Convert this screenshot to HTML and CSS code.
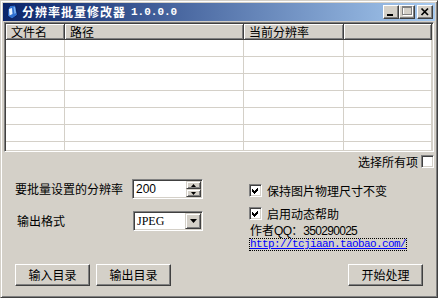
FILE: index.html
```html
<!DOCTYPE html>
<html lang="zh-CN">
<head>
<meta charset="utf-8">
<title>分辨率批量修改器</title>
<link rel="stylesheet" href="styles.css">
</head>
<body>
<div class="window">
  <div class="titlebar">
    <svg class="app-icon" width="16" height="16" viewBox="0 0 16 16">
      <path d="M6 1.5 L11.5 1 L13.5 11 L8 15 L3.5 12 L4 5 Z" fill="#2f6fd0" stroke="#0b1f5c" stroke-width="1"/>
      <path d="M5 5 L8 4 L8.5 10 L5.5 11.5 Z" fill="#e8f2ff"/>
      <path d="M9.5 3 L11 3 L12 9 L10.5 10 Z" fill="#7fb3f0"/>
    </svg>
    <span class="title"><span class="title-cjk">分辨率批量修改器</span> <span class="title-ver">1.0.0.0</span></span>
    <div class="caption-btns">
      <div class="cap">
        <svg width="14" height="12" viewBox="0 0 14 12"><rect x="3" y="8" width="6" height="2" fill="#000"/></svg>
      </div>
      <div class="cap">
        <svg width="14" height="12" viewBox="0 0 14 12" shape-rendering="crispEdges">
          <rect x="3.5" y="1.5" width="9" height="8" fill="none" stroke="#fff"/>
          <rect x="2.5" y="0.5" width="9" height="8" fill="none" stroke="#808080"/>
          <rect x="3" y="1" width="8" height="1" fill="#808080"/>
        </svg>
      </div>
      <div class="cap close">
        <svg width="14" height="12" viewBox="0 0 14 12">
          <path d="M3.5 2.5 L10 9 M10 2.5 L3.5 9" stroke="#000" stroke-width="1.7"/>
        </svg>
      </div>
    </div>
  </div>

  <div class="listview">
    <div class="lv-header">
      <div class="hcell c1">文件名</div>
      <div class="hcell c2">路径</div>
      <div class="hcell c3">当前分辨率</div>
      <div class="hcell c4"></div>
    </div>
    <div class="lv-body">
      <div class="lv-row"><div class="cell c1"></div><div class="cell c2"></div><div class="cell c3"></div><div class="cell c4"></div></div>
      <div class="lv-row"><div class="cell c1"></div><div class="cell c2"></div><div class="cell c3"></div><div class="cell c4"></div></div>
      <div class="lv-row"><div class="cell c1"></div><div class="cell c2"></div><div class="cell c3"></div><div class="cell c4"></div></div>
      <div class="lv-row"><div class="cell c1"></div><div class="cell c2"></div><div class="cell c3"></div><div class="cell c4"></div></div>
      <div class="lv-row"><div class="cell c1"></div><div class="cell c2"></div><div class="cell c3"></div><div class="cell c4"></div></div>
      <div class="lv-row"><div class="cell c1"></div><div class="cell c2"></div><div class="cell c3"></div><div class="cell c4"></div></div>
      <div class="lv-row"><div class="cell c1"></div><div class="cell c2"></div><div class="cell c3"></div><div class="cell c4"></div></div>
    </div>
  </div>

  <div class="selrow">
    <span class="sel-label">选择所有项</span>
    <span class="checkbox"></span>
  </div>

  <div class="form">
    <div class="left">
      <div class="frow">
        <span class="lbl lbl1">要批量设置的分辨率</span>
        <div class="spin">
          <span class="field-text">200</span>
          <div class="spin-btns">
            <div class="spin-btn"><svg width="5" height="3" viewBox="0 0 5 3"><path d="M2.5 0 L5 3 L0 3 Z" fill="#000"/></svg></div>
            <div class="spin-btn"><svg width="5" height="3" viewBox="0 0 5 3"><path d="M0 0 L5 0 L2.5 3 Z" fill="#000"/></svg></div>
          </div>
        </div>
      </div>
      <div class="frow frow2">
        <span class="lbl lbl2">输出格式</span>
        <div class="combo">
          <span class="field-text serif">JPEG</span>
          <div class="drop-btn"><svg width="7" height="4" viewBox="0 0 7 4"><path d="M0 0 L7 0 L3.5 4 Z" fill="#000"/></svg></div>
        </div>
      </div>
    </div>
    <div class="right">
      <div class="cbrow">
        <span class="checkbox checked"><svg width="7" height="7" viewBox="0 0 7 7" shape-rendering="crispEdges"><path d="M0 2 L2 4 L6 0 L6 3 L2 7 L0 5 Z" fill="#000"/></svg></span>
        <span class="cb-label">保持图片物理尺寸不变</span>
      </div>
      <div class="cbrow cbrow2">
        <span class="checkbox checked"><svg width="7" height="7" viewBox="0 0 7 7" shape-rendering="crispEdges"><path d="M0 2 L2 4 L6 0 L6 3 L2 7 L0 5 Z" fill="#000"/></svg></span>
        <span class="cb-label">启用动态帮助</span>
      </div>
      <div class="qq">作者<span class="ascii">QQ</span>：<span class="ascii">350290025</span></div>
      <div class="linkrow"><span class="link">http://tcjiaan.taobao.com/</span></div>
    </div>
  </div>

  <div class="btnrow">
    <div class="btngroup">
      <div class="btn">输入目录</div>
      <div class="btn">输出目录</div>
    </div>
    <div class="btn">开始处理</div>
  </div>
</div>
</body>
</html>
```
FILE: styles.css
```css
html, body {
  margin: 0;
  padding: 0;
  background: #D4D0C8;
}

body {
  font-family: "Noto Sans CJK SC", "Noto Sans", sans-serif;
  font-size: 12px;
  color: #000;
}

.window {
  width: 438px;
  height: 298px;
  box-sizing: border-box;
  background: #D4D0C8;
  border: 1px solid;
  border-color: #D4D0C8 #404040 #404040 #D4D0C8;
  box-shadow: inset 1px 1px #fff, inset -1px -1px #808080;
  padding: 2px;
  display: flex;
  flex-direction: column;
  overflow: hidden;
}

/* Title bar */
.titlebar {
  height: 18px;
  flex: none;
  background: linear-gradient(to right, #0A246A, #A6CAF0);
  display: flex;
  align-items: center;
  padding: 0 2px 0 1px;
}

.app-icon {
  flex: none;
  margin-right: 2px;
}

.title {
  color: #fff;
  font-weight: bold;
  font-size: 12px;
  line-height: 18px;
  white-space: nowrap;
  display: flex;
  align-items: center;
}

.title-cjk {
  letter-spacing: 1px;
}

.title-ver {
  margin-left: 5px;
  font-family: "Liberation Mono", "Courier New", monospace;
  font-size: 11px;
  font-weight: bold;
}

.caption-btns {
  margin-left: auto;
  display: flex;
}

.cap {
  width: 16px;
  height: 14px;
  box-sizing: border-box;
  background: #D4D0C8;
  border: 1px solid;
  border-color: #fff #404040 #404040 #fff;
  box-shadow: inset -1px -1px #808080;
  display: flex;
}

.cap svg {
  display: block;
}

.cap.close {
  margin-left: 2px;
}

/* List view */
.listview {
  flex: none;
  margin: 1px 1px 0;
  height: 130px;
  box-sizing: border-box;
  background: #fff;
  border: 1px solid;
  border-color: #808080 #fff #fff #808080;
  box-shadow: inset 1px 1px #404040, inset -1px -1px #D4D0C8;
  padding: 1px;
  overflow: hidden;
}

.lv-header {
  display: flex;
  height: 16px;
}

.hcell {
  box-sizing: border-box;
  height: 16px;
  background: #D4D0C8;
  border-right: 1px solid #404040;
  border-bottom: 1px solid #404040;
  box-shadow: inset 1px 1px #fff, inset -1px -1px #808080;
  padding-left: 5px;
  line-height: 15px;
  white-space: nowrap;
  overflow: hidden;
}

.c1 { width: 59px; flex: none; }
.c2 { width: 179px; flex: none; }
.c3 { width: 100px; flex: none; }
.c4 { flex: 1; }

.lv-row {
  display: flex;
  height: 17px;
}

.cell {
  box-sizing: border-box;
  height: 17px;
  border-right: 1px solid #D4D0C8;
  border-bottom: 1px solid #D4D0C8;
}

/* Select all */
.selrow {
  flex: none;
  height: 19px;
  display: flex;
  justify-content: flex-end;
  align-items: center;
  padding-right: 1px;
}

.sel-label {
  margin-right: 3px;
  line-height: 14px;
}

.checkbox {
  width: 13px;
  height: 13px;
  box-sizing: border-box;
  background: #fff;
  border: 1px solid;
  border-color: #808080 #fff #fff #808080;
  box-shadow: inset 1px 1px #404040, inset -1px -1px #D4D0C8;
  display: flex;
  align-items: center;
  justify-content: center;
  flex: none;
}

.checkbox svg {
  display: block;
}

/* Form */
.form {
  flex: none;
  display: flex;
  margin-top: 8px;
  padding-left: 12px;
}

.left {
  width: 234px;
  flex: none;
}

.frow {
  display: flex;
  align-items: center;
  height: 20px;
}

.frow2 {
  margin-top: 12px;
}

.lbl {
  flex: none;
  line-height: 14px;
}

.lbl1 { width: 117px; }
.lbl2 { width: 116px; padding-left: 2px; }

.spin,
.combo {
  width: 71px;
  height: 20px;
  box-sizing: border-box;
  background: #fff;
  border: 1px solid;
  border-color: #808080 #fff #fff #808080;
  box-shadow: inset 1px 1px #404040, inset -1px -1px #D4D0C8;
  padding: 1px;
  display: flex;
  align-items: center;
}

.combo {
  width: 70px;
}

.field-text {
  flex: 1;
  padding-left: 2px;
  font-family: "Liberation Sans", Arial, sans-serif;
  font-size: 12px;
  line-height: 16px;
}

.field-text.serif {
  font-family: "Liberation Serif", "Times New Roman", serif;
  font-size: 12px;
}

.spin-btns {
  width: 15px;
  height: 16px;
  display: flex;
  flex-direction: column;
  flex: none;
}

.spin-btn,
.drop-btn {
  box-sizing: border-box;
  background: #D4D0C8;
  border: 1px solid;
  border-color: #D4D0C8 #404040 #404040 #D4D0C8;
  box-shadow: inset 1px 1px #fff, inset -1px -1px #808080;
  display: flex;
  align-items: center;
  justify-content: center;
}

.spin-btn {
  height: 8px;
}

.drop-btn {
  width: 16px;
  height: 16px;
  flex: none;
}

.spin-btn svg,
.drop-btn svg {
  display: block;
}

.right {
  padding-top: 4px;
  flex: 1;
}

.cbrow {
  height: 15px;
  display: flex;
  align-items: center;
}

.cbrow2 {
  margin-top: 8px;
}

.cb-label {
  margin-left: 5px;
  line-height: 14px;
}

.qq {
  margin-top: 2px;
  padding-left: 1px;
  height: 14px;
  line-height: 14px;
}

.ascii {
  font-family: "Liberation Sans", Arial, sans-serif;
  letter-spacing: -0.7px;
}

.linkrow {
  margin-top: 1px;
  display: flex;
}

.link {
  display: block;
  height: 13px;
  box-sizing: border-box;
  border: 1px dotted #000;
  color: #0000FF;
  text-decoration: underline;
  font-family: "Liberation Mono", "Courier New", monospace;
  font-size: 11px;
  letter-spacing: -0.6px;
  line-height: 11px;
  white-space: nowrap;
}

/* Bottom buttons */
.btnrow {
  margin-top: auto;
  margin-bottom: 9px;
  display: flex;
  justify-content: space-between;
  padding: 0 12px;
}

.btngroup {
  display: flex;
  gap: 6px;
}

.btn {
  width: 75px;
  height: 22px;
  box-sizing: border-box;
  background: #D4D0C8;
  border: 1px solid;
  border-color: #fff #404040 #404040 #fff;
  box-shadow: inset -1px -1px #808080;
  display: flex;
  align-items: center;
  justify-content: center;
  line-height: 14px;
}
```
